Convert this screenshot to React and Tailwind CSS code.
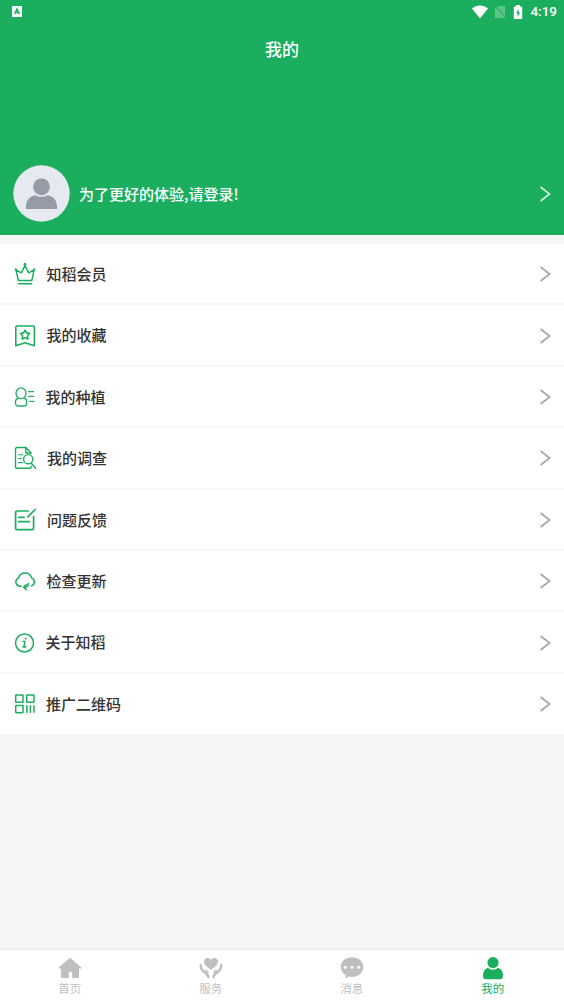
const stroke = {
  fill: 'none',
  stroke: 'currentColor',
  strokeWidth: 1.5,
  strokeLinecap: 'round',
  strokeLinejoin: 'round',
}

function CrownIcon() {
  return (
    <svg width="24" height="24" viewBox="0 0 24 24" {...stroke}>
      <path d="M5.400 18.500 2.900 7.800l5.400 3L12 3.500l3.700 7.300 5.400-3-2.300 10.700Z" />
      <path d="M5.600 21.800h13" />
      <circle cx="12" cy="2.300" r="0.8" />
      <circle cx="2.700" cy="7.400" r="0.4" />
      <circle cx="21.400" cy="7.400" r="0.4" />
    </svg>
  )
}

function BookmarkIcon() {
  return (
    <svg width="24" height="24" viewBox="0 0 24 24" {...stroke} strokeWidth="1.6">
      <path d="M4 2h16.200a1.200 1.200 0 0 1 1.200 1.200v18.600L12 18.700l-9.200 3.100V3.200A1.200 1.200 0 0 1 4 2Z" />
      <path d="m12.100 6.100 1.500 2.800 3.100.6-2.200 2.300.4 3.200-2.800-1.400L9.200 15l.4-3.200-2.200-2.300 3.200-.6Z" />
    </svg>
  )
}

function PlantingIcon() {
  return (
    <svg width="24" height="24" viewBox="0 0 24 24" {...stroke} strokeWidth="1.3">
      <ellipse cx="8" cy="8.300" rx="5" ry="5.400" />
      <path d="M4.800 13.200C3.200 14 2.400 15.500 2.400 17.400c0 2.600 1.200 3.600 3.200 3.600h5c2 0 3.200-1 3.200-3.600 0-1.900-.8-3.400-2.500-4.200" />
      <path d="M15.500 6.700h5M15.800 11.400h4.800M16.800 16.300H21" />
    </svg>
  )
}

function SurveyIcon() {
  return (
    <svg width="24" height="24" viewBox="0 0 24 24" {...stroke} strokeWidth="1.4">
      <path d="M18.200 20.200v.8a1.300 1.300 0 0 1-1.300 1.300H3.800a1.300 1.300 0 0 1-1.300-1.300V2.800a1.300 1.300 0 0 1 1.300-1.300h9L18 7" />
      <path d="M12.800 1.500V7H18" />
      <circle cx="15.200" cy="13.200" r="4.600" />
      <path d="m18.500 17.500 4 4.800" />
      <path d="M5.300 8.800h4.500M5.300 12.600h3.500M5.300 16.600h4.300" strokeWidth="1" />
    </svg>
  )
}

function FeedbackIcon() {
  return (
    <svg width="24" height="24" viewBox="0 0 24 24" {...stroke} strokeWidth="1.7">
      <path d="M15.200 3H4a1.400 1.400 0 0 0-1.400 1.400v15.800A1.400 1.400 0 0 0 4 21.600h15.200a1.400 1.400 0 0 0 1.400-1.400V8.500" />
      <path d="m22.200 1.500-7.300 7.400M5.700 9.300h5.400M5.700 13.700h10.600" />
    </svg>
  )
}

function UpdateIcon() {
  return (
    <svg width="24" height="24" viewBox="0 0 24 24" {...stroke}>
      <path d="M8.400 17.200H6.600a4.300 4.300 0 0 1-.9-8.300 6.600 6.600 0 0 1 12.800 0 4.300 4.300 0 0 1-.2 8.200" />
      <path d="M15.300 14.600c0 2.400-.6 3.500-2.500 3.500h-2M13.200 15.600l-2.500 2.500 2.500 2.500" />
    </svg>
  )
}

function AboutIcon() {
  return (
    <svg width="24" height="24" viewBox="0 0 24 24" {...stroke}>
      <circle cx="11.500" cy="12" r="9" />
      <path d="M10 10.400h2l-1.100 5.300c-.1.700.7.800 1.900 0M9.900 16h2.400" strokeWidth="1.400" />
      <circle cx="12.500" cy="7.400" r="0.5" fill="currentColor" strokeWidth="1" />
    </svg>
  )
}

function QrIcon() {
  return (
    <svg width="24" height="24" viewBox="0 0 24 24" {...stroke}>
      <rect x="2.700" y="3" width="7.300" height="7.300" rx="0.4" />
      <rect x="13.700" y="3" width="7.300" height="7.300" rx="0.4" />
      <rect x="2.700" y="13.400" width="7.300" height="7.300" rx="0.4" />
      <path d="M13.900 13.700v6.600M17.400 13.700v6.600M21 13.700v6.600" />
    </svg>
  )
}

function Chevron({ className }) {
  return (
    <svg width="12" height="18" viewBox="0 0 12 18" fill="none" stroke="currentColor" strokeWidth="1.6" className={className}>
      <path d="m1.600 2 9 7-9 7" />
    </svg>
  )
}

const MENU = [
  { icon: CrownIcon,    label: '知稻会员',   gap: 'ml-[9.5px]' },
  { icon: BookmarkIcon, label: '我的收藏',   gap: 'ml-[9.5px]' },
  { icon: PlantingIcon, label: '我的种植',   gap: 'ml-[8.5px]' },
  { icon: SurveyIcon,   label: '我的调查',   gap: 'ml-2.5' },
  { icon: FeedbackIcon, label: '问题反馈',   gap: 'ml-2.5' },
  { icon: UpdateIcon,   label: '检查更新',   gap: 'ml-[9.5px]' },
  { icon: AboutIcon,    label: '关于知稻',   gap: 'ml-[8.5px]' },
  { icon: QrIcon,       label: '推广二维码', gap: 'ml-[9px]' },
]

function HomeIcon() {
  return (
    <svg width="24" height="24" viewBox="0 0 24 24" fill="currentColor">
      <path d="M11.300 2.200a1 1 0 0 1 1.400 0l10.600 9.300c.5.500.3 1.100-.4 1.100H21V21a1 1 0 0 1-1 1h-5.800v-5.200a1 1 0 0 0-1-1h-1.400a1 1 0 0 0-1 1V22H4a1 1 0 0 1-1-1v-8.400H1.100c-.7 0-.9-.6-.4-1.100Z" />
    </svg>
  )
}

function ServiceIcon() {
  return (
    <svg width="24" height="24" viewBox="0 0 24 24">
      <path d="M12 13.800C7.500 10.800 5 8.700 5 5.700 5 3.500 6.600 2 8.600 2c1.400 0 2.700.8 3.400 2 .7-1.200 2-2 3.400-2C17.400 2 19 3.500 19 5.700c0 3-2.500 5.100-7 8.100Z" fill="currentColor" />
      <path d="M1.700 9c.1 3.400 1.700 6 4.400 7.600 2.300 1.400 3.300 2.500 3.300 4.600M22.300 9c-.1 3.400-1.700 6-4.400 7.600-2.300 1.400-3.300 2.500-3.300 4.600" fill="none" stroke="currentColor" strokeWidth="2.400" strokeLinecap="round" />
      <path d="m6.800 14.200 2.200 2.300M17.200 14.200 15 16.500" fill="none" stroke="currentColor" strokeWidth="1.500" strokeLinecap="round" />
    </svg>
  )
}

function MessageIcon() {
  return (
    <svg width="24" height="24" viewBox="0 0 24 24">
      <path d="M12 1.200c6.400 0 11.300 4.200 11.300 9.900S18.400 21 12 21c-1.200 0-2.300-.1-3.400-.4-.8.900-1.900 1.700-3.200 2.200.3-1.200.3-2.500.1-3.800C2.600 17.200.7 14.500.7 11.100c0-5.700 4.900-9.900 11.300-9.900Z" fill="currentColor" />
      <circle cx="5.300" cy="11.200" r="1.500" fill="#fff" />
      <circle cx="12" cy="11.200" r="1.500" fill="#fff" />
      <circle cx="18.700" cy="11.200" r="1.500" fill="#fff" />
    </svg>
  )
}

function MineIcon() {
  return (
    <svg width="24" height="24" viewBox="0 0 24 24" fill="currentColor">
      <circle cx="12" cy="6.600" r="5.600" />
      <path d="M6.800 11.800c2.800 2.600 7.600 2.600 10.400 0 3.300 1.200 4.800 4.200 4.800 7.900 0 2.500-.8 3.500-3 3.500H5c-2.200 0-3-1-3-3.500 0-3.700 1.500-6.700 4.800-7.900Z" />
    </svg>
  )
}

const TABS = [
  { icon: HomeIcon,    label: '首页' },
  { icon: ServiceIcon, label: '服务' },
  { icon: MessageIcon, label: '消息' },
  { icon: MineIcon,    label: '我的', active: true },
]

function StatusBar() {
  return (
    <div className="flex h-[23px] items-center pl-3 pr-[7px]">
      <svg width="10" height="11" viewBox="0 0 10 11">
        <rect width="10" height="11" rx="0.6" fill="#fff" />
        <path d="M2.600 8 5 3l2.400 5M3.500 6.500h3" fill="none" stroke="#1bae5e" strokeWidth="1.500" />
      </svg>
      <svg width="18" height="14" viewBox="0 0 18 14" className="ml-auto">
        <path d="M1 3.600C5.600-.4 12.400-.4 17 3.600L9 13.500Z" fill="#fff" />
      </svg>
      <svg width="12" height="14" viewBox="0 0 12 14" className="ml-[5px]">
        <path d="M4.300 1H11v12H1V4.300Z" fill="#fff" opacity="0.28" />
        <path d="m.6 1.600 10.800 11.300" stroke="#1bae5e" strokeWidth="1.800" />
        <path d="m.6 2.400 10.400 10.800" stroke="#fff" strokeWidth="1" opacity="0.4" />
      </svg>
      <svg width="10" height="14" viewBox="0 0 10 14" className="ml-[7px]">
        <path d="M3 0h4v1.500h1.500c.4 0 .7.300.7.700v11c0 .4-.3.700-.7.700h-7a.7.700 0 0 1-.7-.7v-11c0-.4.300-.7.700-.7H3Z" fill="#fff" />
        <path d="M5.600 4 3 8.200h1.600V12l2.600-4.500H5.600Z" fill="#1bae5e" />
      </svg>
      <span className="ml-[7px] font-[Roboto,sans-serif] text-[13.500px] leading-none font-medium">4:19</span>
    </div>
  )
}

export default function App() {
  return (
    <div className="flex h-[1002px] w-[564px] flex-col overflow-hidden bg-[#f6f6f6] font-['Noto_Sans_CJK_SC',sans-serif]">
      <header className="flex h-[235px] shrink-0 flex-col bg-[#1bae5e] text-white">
        <StatusBar />
        <h1 className="flex h-[52px] items-center justify-center text-[17px] font-medium">我的</h1>
        <div className="mt-auto mb-[13px] flex items-center pr-[13px] pl-[13px]">
          <svg width="57" height="57" viewBox="0 0 57 57">
            <circle cx="28.500" cy="28.500" r="28.200" fill="#e6eaf0" />
            <circle cx="28.500" cy="21.800" r="8.400" fill="#959ca8" />
            <path d="M13 44v-2.500c0-6.500 4-10.500 9.500-11.300 3.700 2.200 8.300 2.200 12 0C40 31 44 35 44 41.500V44Z" fill="#959ca8" />
          </svg>
          <span className="ml-[9px] pt-px text-[15px] font-medium">为了更好的体验,请登录!</span>
          <Chevron className="ml-auto text-white/80" />
        </div>
      </header>

      {/* Menu */}
      <main className="mt-[9px] flex h-[490px] shrink-0 flex-col bg-white">
        {MENU.map(({ icon: Icon, label, gap }, i) => (
          <div
            key={label}
            className={`flex h-[61.400px] shrink-0 items-center pt-px pr-[13px] pl-[13px] ${i < MENU.length - 1 ? 'border-b-2 border-[#f8f8f8]' : 'pb-[2px]'}`}
          >
            <span className="text-[#1bae5e]"><Icon /></span>
            <span className={`${gap} text-[15px] font-medium text-[#333]`}>{label}</span>
            <Chevron className="ml-auto text-[#a5a5a5]" />
          </div>
        ))}
      </main>

      {/* Tab bar */}
      <nav className="mt-auto grid h-[54px] shrink-0 grid-cols-4 border-t-2 border-[#f0f0f0] bg-white">
        {TABS.map(({ icon: Icon, label, active }) => (
          <div
            key={label}
            className={`flex flex-col items-center pt-[6px] pr-[1.500px] ${active ? 'text-[#1bae5e]' : 'text-[#bfbfbf]'}`}
          >
            <Icon />
            <span className="text-[11.500px] leading-4">{label}</span>
          </div>
        ))}
      </nav>
    </div>
  )
}
